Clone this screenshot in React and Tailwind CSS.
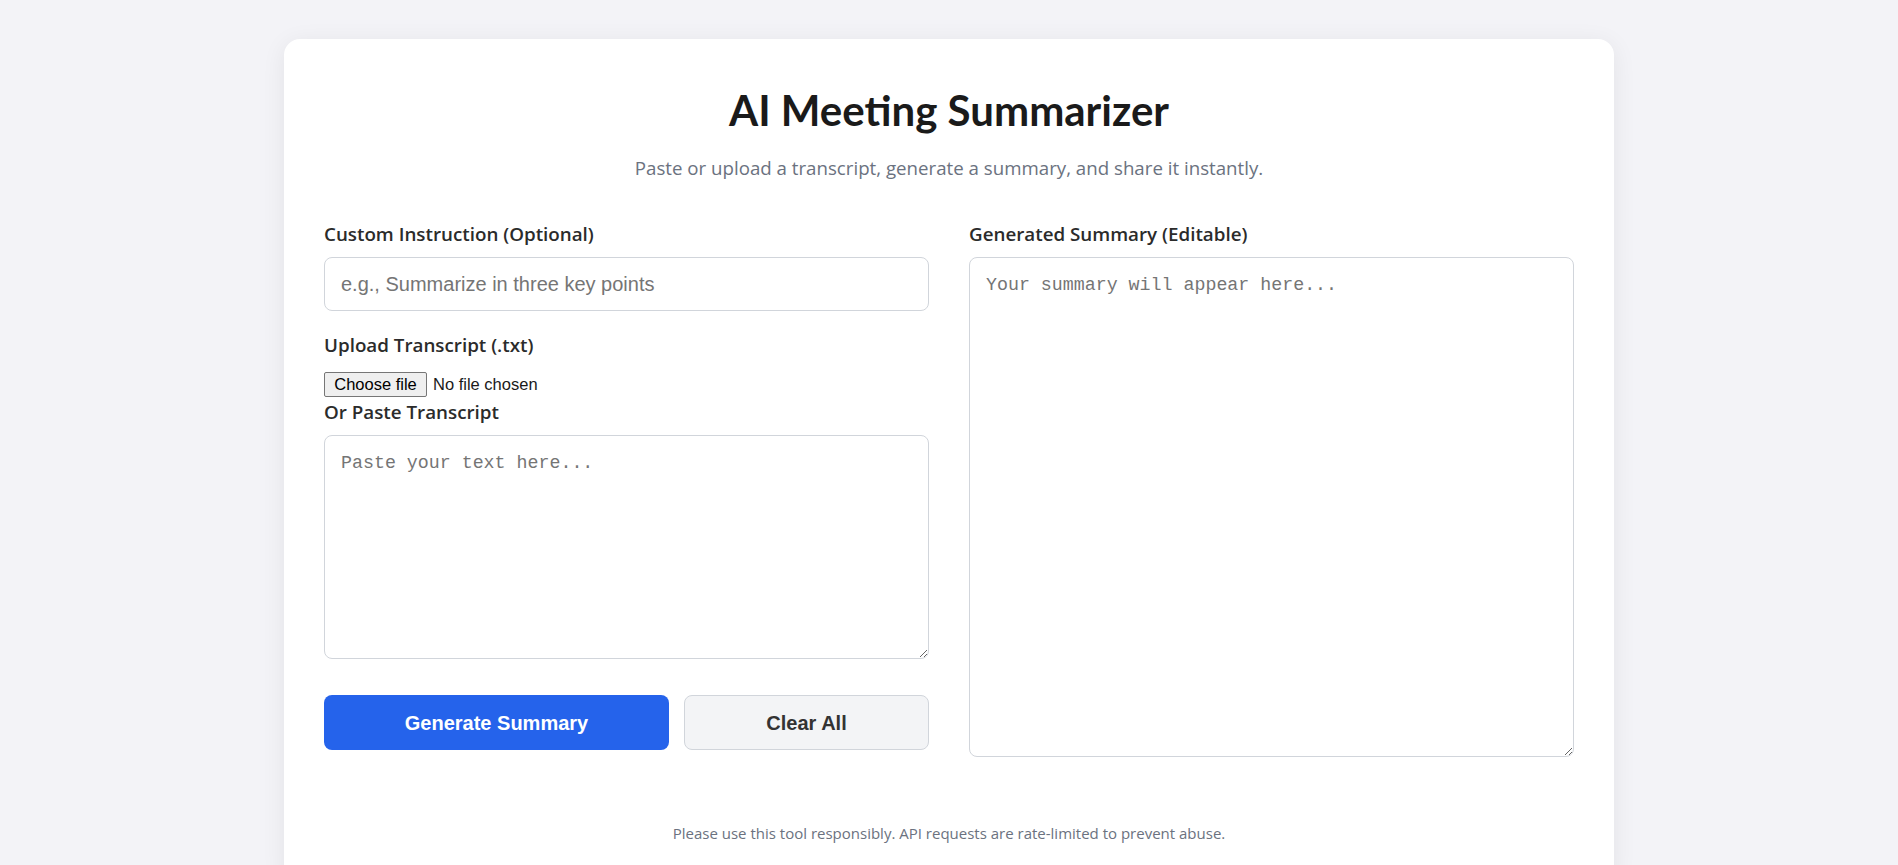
import React from "react";

export default function App() {
  return (
    <div className="min-h-screen bg-[#f3f3f7] pt-[39px] font-['Open_Sans','Noto_Sans',sans-serif]">
      <div className="mx-auto w-[1330px] rounded-2xl bg-white px-10 pt-[45px] pb-10 shadow-[0_4px_24px_rgba(0,0,0,0.07)]">
        <h1 className="text-center font-['Lato','Open_Sans',sans-serif] text-[42px] leading-[52px] font-bold text-[#1a1a1a]">
          AI Meeting Summarizer
        </h1>
        <p className="mt-[18px] text-center text-[18.7px] leading-[27px] text-[#6b7280]">
          Paste or upload a transcript, generate a summary, and share it instantly.
        </p>

        <div className="mt-[40px] grid grid-cols-2 gap-10">
          <div className="flex flex-col">
            <label className="mb-[9px] block text-[18.8px] leading-[27px] font-semibold text-[#2b2b2b]">
              Custom Instruction (Optional)
            </label>
            <input
              type="text"
              placeholder="e.g., Summarize in three key points"
              className="h-[54px] w-full rounded-lg border border-[#d1d5db] px-4 font-['Liberation_Sans',Arial,sans-serif] text-[20px] text-[#333] outline-none placeholder:text-[#757575]"
            />

            <label className="mt-[21px] mb-[13px] block text-[18.8px] leading-[27px] font-semibold text-[#2b2b2b]">
              Upload Transcript (.txt)
            </label>
            <div className="flex h-[25px] items-center font-['Liberation_Sans',Arial,sans-serif] text-[16.5px] text-[#1a1a1a]">
              <button
                type="button"
                className="flex h-[25px] w-[103px] items-center justify-center rounded-[2px] border border-[#767676] bg-[#efefef] text-black"
              >
                Choose file
              </button>
              <span className="ml-[6px]">No file chosen</span>
            </div>

            <label className="mt-[2px] mb-[9px] block text-[18.8px] leading-[27px] font-semibold text-[#2b2b2b]">
              Or Paste Transcript
            </label>
            <textarea
              placeholder="Paste your text here..."
              className="block h-[224px] w-full rounded-lg border border-[#d1d5db] px-4 pt-[14px] pb-4 font-['Liberation_Mono',monospace] text-[18.3px] text-[#333] outline-none placeholder:text-[#757575]"
            />

            <div className="mt-[36px] flex gap-[15px]">
              <button className="h-[55px] w-[345px] rounded-lg bg-[#2563eb] font-['Liberation_Sans',Arial,sans-serif] text-[20px] font-bold text-white">
                Generate Summary
              </button>
              <button className="h-[55px] flex-1 rounded-lg border border-[#d1d5db] bg-[#f3f4f6] font-['Liberation_Sans',Arial,sans-serif] text-[20px] font-bold text-[#333]">
                Clear All
              </button>
            </div>
          </div>

          <div className="flex flex-col">
            <label className="mb-[9px] block text-[18.8px] leading-[27px] font-semibold text-[#2b2b2b]">
              Generated Summary (Editable)
            </label>
            <textarea
              placeholder="Your summary will appear here..."
              className="block h-[500px] w-full rounded-lg border border-[#d1d5db] px-4 pt-[14px] pb-4 font-['Liberation_Mono',monospace] text-[18.3px] text-[#333] outline-none placeholder:text-[#757575]"
            />
          </div>
        </div>

        <p className="mt-[66px] text-center text-[15px] leading-[21px] text-[#6b7280]">
          Please use this tool responsibly. API requests are rate-limited to prevent abuse.
        </p>
      </div>
    </div>
  );
}
